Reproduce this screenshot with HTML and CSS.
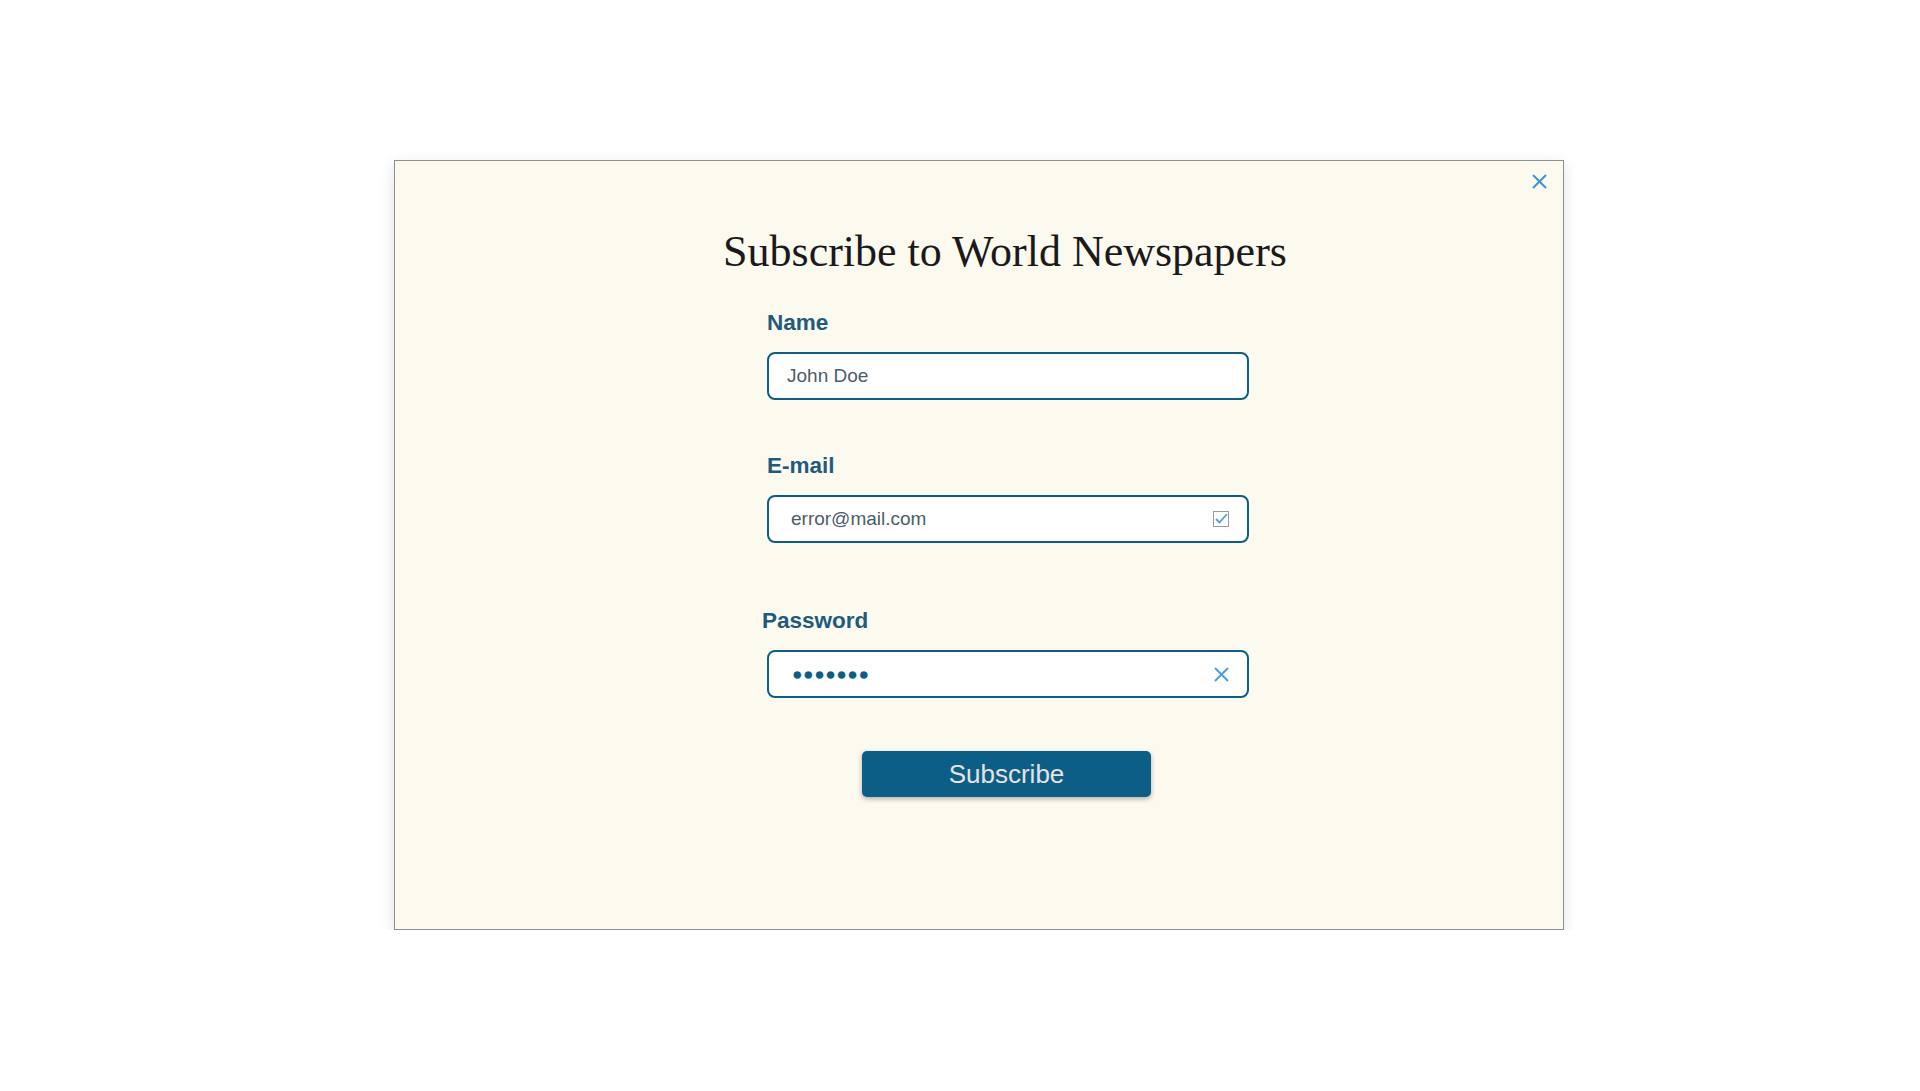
FILE: index.html
```html
<!DOCTYPE html>
<html lang="en">
<head>
    <meta charset="UTF-8">
    <meta name="viewport" content="width=device-width, initial-scale=1.0">
    <title>Subscribe to World Newspapers</title>
    <link rel="stylesheet" href="styles.css">
</head>
<body>
    <div class="modal">
        <button class="close-btn" aria-label="Close">
            <svg width="15" height="15" viewBox="0 0 15 15"><path d="M1 1 L14 14 M14 1 L1 14" stroke="#3f93dc" stroke-width="2" fill="none"/></svg>
        </button>

        <h1 class="title">Subscribe to World Newspapers</h1>

        <form class="form">
            <div class="field field-name">
                <label for="name">Name</label>
                <div class="input-box">
                    <input type="text" id="name" value="John Doe">
                </div>
            </div>

            <div class="field field-email">
                <label for="email">E-mail</label>
                <div class="input-box">
                    <input type="text" id="email" value="error@mail.com">
                    <svg class="icon" width="16" height="16" viewBox="0 0 16 16">
                        <rect x="0.5" y="0.5" width="15" height="15" fill="#fff" stroke="#9c9c9c"/>
                        <path d="M3 8 L6.5 11.5 L14 3" stroke="#4a9ee0" stroke-width="1.8" fill="none"/>
                    </svg>
                </div>
            </div>

            <div class="field field-password">
                <label for="password">Password</label>
                <div class="input-box">
                    <div class="dots" id="password">●●●●●●●</div>
                    <svg class="icon" width="15" height="15" viewBox="0 0 15 15"><path d="M1 1 L14 14 M14 1 L1 14" stroke="#4a9ee0" stroke-width="2" fill="none"/></svg>
                </div>
            </div>

            <button type="button" class="subscribe">Subscribe</button>
        </form>
    </div>
</body>
</html>
```

FILE: styles.css
```css
body {
    margin: 0;
    background-color: #ffffff;
    font-family: "Liberation Sans", Arial, sans-serif;
}
.modal {
    position: relative;
    box-sizing: border-box;
    width: 1170px;
    height: 770px;
    margin: 160px 0 0 394px;
    padding: 64px 0 0 58px;
    background-color: #fcf9ee;
    border: 1px solid #8e8e8e;
    box-shadow: 0 4px 14px rgba(0, 0, 0, 0.12);
    display: flex;
    flex-direction: column;
    align-items: center;
}
.close-btn {
    position: absolute;
    top: 13px;
    right: 16px;
    padding: 0;
    border: none;
    background: none;
    cursor: pointer;
    line-height: 0;
}
.title {
    margin: 0;
    font-family: "Liberation Serif", "Times New Roman", serif;
    font-weight: normal;
    font-size: 44px;
    line-height: 54px;
    color: #1a1a1a;
    margin-left: -6px;
}
.form {
    width: 482px;
    display: flex;
    flex-direction: column;
}
.field label {
    display: block;
    font-size: 22.5px;
    line-height: 26px;
    font-weight: bold;
    color: #1f5b7c;
    margin-bottom: 16px;
}
.field-name {
    margin-top: 31px;
}
.field-email {
    margin-top: 53px;
}
.field-password {
    margin-top: 65px;
}
.field-password label {
    margin-left: -5px;
}
.input-box {
    box-sizing: border-box;
    height: 48px;
    border: 2px solid #0c5e87;
    border-radius: 8px;
    background-color: #ffffff;
    display: flex;
    align-items: center;
    padding: 0 18px;
    gap: 10px;
}
.input-box input {
    flex: 1;
    min-width: 0;
    border: none;
    outline: none;
    padding: 0;
    background: transparent;
    font-family: "Liberation Sans", Arial, sans-serif;
    font-size: 19px;
    color: #4b5d6a;
}
.field-email input {
    padding-left: 4px;
}
.dots {
    flex: 1;
    padding-left: 5px;
    font-size: 17.5px;
    line-height: 20px;
    letter-spacing: 0.5px;
    color: #0c5e87;
}
.icon {
    flex: none;
}
.subscribe {
    align-self: center;
    margin-top: 53px;
    margin-left: -3px;
    width: 289px;
    height: 46px;
    border: none;
    border-radius: 5px;
    background-color: #0c5e87;
    color: #e4e4e4;
    font-family: "Liberation Sans", Arial, sans-serif;
    font-size: 26px;
    box-shadow: 0 2px 5px rgba(0, 0, 0, 0.3);
    cursor: pointer;
}
```
